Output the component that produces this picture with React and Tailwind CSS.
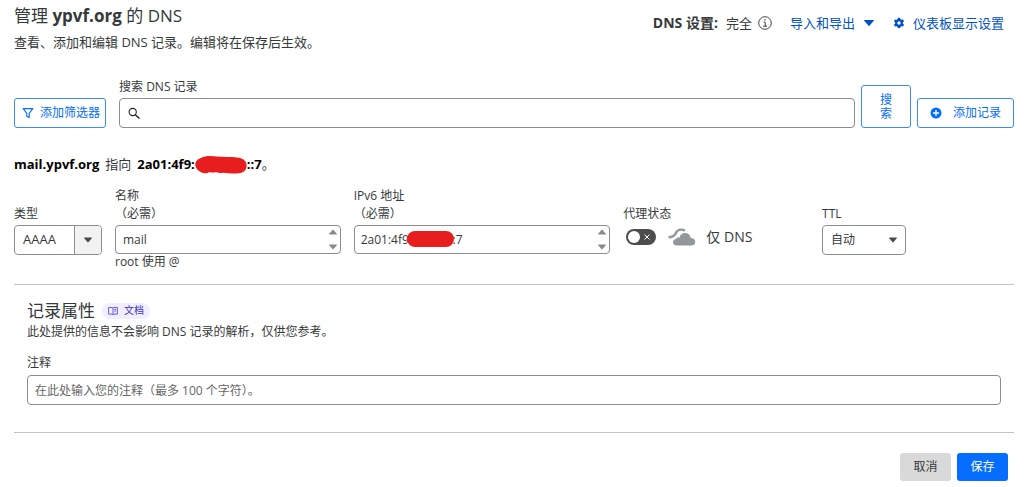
import React, { useState } from 'react';

const Caret = ({ className }) => (
  <svg viewBox="0 0 10 6" className={className} fill="currentColor" aria-hidden="true">
    <path d="M0.6 0h8.8a.5.5 0 0 1 .4.8L5.4 5.8a.5.5 0 0 1-.8 0L.2.8A.5.5 0 0 1 .6 0z" />
  </svg>
);

const FunnelIcon = () => (
  <svg viewBox="0 0 12 12" className="w-3 h-3" fill="none" stroke="currentColor" strokeWidth="1.1" strokeLinejoin="round" aria-hidden="true">
    <path d="M1.2 1.6h9.6L7.2 6.4v4.2L4.8 9.2V6.4z" />
  </svg>
);

const SearchIcon = () => (
  <svg viewBox="0 0 12 12" className="w-3 h-3 shrink-0" fill="none" stroke="#222" strokeWidth="1.1" aria-hidden="true">
    <circle cx="4.7" cy="5" r="3.6" />
    <path d="M7.3 7.700l4.200 3.800" strokeWidth="1.4" />
  </svg>
);

const InfoIcon = () => (
  <svg viewBox="0 0 14 14" className="w-3.5 h-3.5" fill="none" stroke="#444" aria-hidden="true">
    <circle cx="7" cy="7" r="6.3" strokeWidth="1" />
    <path d="M5.6 6h1.6v4.2M5.2 10.3h3.8" strokeWidth="1" />
    <circle cx="7" cy="3.8" r="0.8" fill="#444" stroke="none" />
  </svg>
);

const GearIcon = () => (
  <svg viewBox="0 0 12 12" className="w-3 h-3" aria-hidden="true">
    <g fill="#0051c3">
      <rect x="4.7" y="0.8" width="2.6" height="10.4" rx="0.6" />
      <rect x="4.7" y="0.8" width="2.6" height="10.4" rx="0.6" transform="rotate(60 6 6)" />
      <rect x="4.7" y="0.8" width="2.6" height="10.4" rx="0.6" transform="rotate(120 6 6)" />
      <circle cx="6" cy="6" r="3.9" />
    </g>
    <circle cx="6" cy="6" r="1.7" fill="#fff" />
  </svg>
);

const PlusCircleIcon = () => (
  <svg viewBox="0 0 12 12" className="w-3 h-3" aria-hidden="true">
    <circle cx="6" cy="6" r="5.5" fill="#056dff" />
    <path d="M6 3v6M3 6h6" stroke="#fff" strokeWidth="1.3" />
  </svg>
);

const BookIcon = () => (
  <svg viewBox="0 0 10 9" className="w-2.5 h-2.5" fill="none" stroke="#5b4fd6" strokeWidth="0.9" aria-hidden="true">
    <path d="M.6 1h3.6l.8.6.8-.6h3.6v6.6H5.8L5 8.2l-.8-.6H.6zM5 1.6v6.6M6.4 3h1.7M6.4 4.6h1.7" />
  </svg>
);

const CloudIcon = () => (
  <svg viewBox="0 0 28 20" className="w-7 h-5 shrink-0" fill="#92979b" aria-hidden="true">
    <path d="M.5 10.200c3.800 0 5.400-.6 7-3.600C9 3.600 10.800 2.600 13 2.600c1.400 0 2.600.3 3.800 1" fill="none" stroke="#92979b" strokeWidth="2.400" />
    <path d="M9.300 18.500c-2.600 0-4.300-1.300-4.300-3.300 0-1.800 1.200-3 3-3.200.3-1 1.100-1.600 2.100-1.600.5 0 .9.100 1.200.3C12.100 7.600 14.300 6 17 6c3 0 5.200 1.900 5.700 4.900 2.600.1 4.600 1.600 4.600 3.800s-1.600 3.800-4 3.800z" />
  </svg>
);

const Scribble = ({ className }) => (
  <svg viewBox="0 0 52 18" preserveAspectRatio="none" className={className} fill="#e81e1e" aria-hidden="true">
    <path d="M6 2C10-.4 17-.2 22 .6c6 .6 14 .2 20 .8 6 .4 9.500 3.400 9.600 8 0 5-3.200 7.400-7.600 7.800-6 .6-11 .2-16-.4-3 .4-5 .2-7-.8-2 .6-4.500.8-6.500 0-2 1.200-5.500 2-8.500.2C2.500 14.500.2 12 .3 8.600.4 5.500 2.800 2.800 6 2z" />
  </svg>
);

const Steppers = () => (
  <span className="flex flex-col justify-between h-full py-[3px] pr-[3px] text-[#8a8a8a]">
    <Caret className="w-2 h-1.5 rotate-180" />
    <Caret className="w-2 h-1.5" />
  </span>
);

const Field = ({ id, label, required, children }) => (
  <div className="min-w-0">
    <label htmlFor={id} className="flex flex-col justify-end h-9 mb-0.5 leading-[18px]">
      <span>{label}</span>
      {required && <span>（必需）</span>}
    </label>
    {children}
  </div>
);

const App = () => {
  const [name, setName] = useState('mail');
  const [address, setAddress] = useState('2a01:4f9:' + '\u00a0'.repeat(12) + '::7');
  const [proxied, setProxied] = useState(false);

  return (
    <main className="pl-3.5 pr-2.5 pt-1 pb-2 bg-white text-[#36393a] text-xs font-['Open_Sans','Noto_Sans_CJK_SC',sans-serif]">
      <header className="flex justify-between">
        <div>
          <h1 className="text-[17px] leading-6">
            管理 <strong className="font-bold">ypvf.org</strong> 的 DNS
          </h1>
          <p className="mt-1 text-[13px] leading-5">查看、添加和编辑 DNS 记录。编辑将在保存后生效。</p>
        </div>
        <div className="flex items-center h-[38px] pr-2.5 text-[13px] leading-5">
          <strong className="mr-2 text-sm font-bold">DNS 设置:</strong>
          <span className="mr-1.5">完全</span>
          <button type="button" aria-label="DNS"><InfoIcon /></button>
          <button type="button" className="flex items-center gap-2 ml-[18px] text-[#0051c3]">
            导入和导出 <Caret className="w-3 h-1.5" />
          </button>
          <a href="#settings" className="flex items-center gap-2 ml-[18px] text-[#0051c3]">
            <GearIcon /> 仪表板显示设置
          </a>
        </div>
      </header>

      <form className="flex items-end mt-[25px]" onSubmit={(e) => e.preventDefault()}>
        <button type="button" className="flex items-center gap-1.5 h-[30px] pl-[7px] pr-[5px] shrink-0 border border-[#3b8bff] rounded-[3px] text-[#056dff]">
          <FunnelIcon /> 添加筛选器
        </button>
        <div className="flex-1 min-w-0 ml-[13px]">
          <label htmlFor="search" className="block leading-5 mb-px">搜索 DNS 记录</label>
          <div className="flex items-center gap-2 h-[30px] px-2 border border-[#8d8d8d] rounded-[4px]">
            <SearchIcon />
            <input id="search" type="text" className="flex-1 min-w-0 outline-none" />
          </div>
        </div>
        <button type="submit" className="w-[50px] h-[43px] px-4 ml-1.5 leading-[14px] shrink-0 border border-[#3b8bff] rounded-[3px] text-[#056dff]">
          搜索
        </button>
        <button type="button" className="flex items-center justify-center gap-[11px] h-[30px] px-3 ml-1.5 shrink-0 border border-[#3b8bff] rounded-[3px] text-[#056dff]">
          <PlusCircleIcon /> 添加记录
        </button>
      </form>

      <p className="flex items-center mt-[25px] h-6 text-[13px]">
        <strong className="font-bold text-black">mail.ypvf.org</strong>
        <span className="mx-1.5">指向</span>
        <strong className="font-bold text-black">2a01:4f9:</strong>
        <Scribble className="w-[52px] h-[18px]" />
        <strong className="font-bold text-black">::7</strong>。
      </p>

      <form onSubmit={(e) => e.preventDefault()}>
        <div className="grid grid-cols-[88px_226fr_257fr_186fr_84px_95fr] gap-x-[13px] mt-2.5 h-[97px]">
          <Field id="type" label="类型">
            <div className="grid h-[30px]">
              <select id="type" className="col-start-1 row-start-1 appearance-none pl-2 border border-[#8d8d8d] rounded-[4px] bg-white text-[13px]">
                <option>AAAA</option>
              </select>
              <span className="col-start-1 row-start-1 justify-self-end flex items-center justify-center w-[27px] my-px mr-px border-l border-[#8d8d8d] rounded-r-[3px] bg-[#f2f2f2] text-[#4a4a4a] pointer-events-none">
                <Caret className="w-2 h-1.5" />
              </span>
            </div>
          </Field>

          <Field id="name" label="名称" required>
            <div className="flex items-center h-[29px] border border-[#8d8d8d] rounded-[4px]">
              <input id="name" type="text" value={name} onChange={(e) => setName(e.target.value)} className="flex-1 min-w-0 pl-[7px] outline-none" />
              <Steppers />
            </div>
            <p className="leading-4">root 使用 @</p>
          </Field>

          <Field id="address" label="IPv6 地址" required>
            <div className="relative flex items-center h-[29px] border border-[#8d8d8d] rounded-[4px]">
              <input id="address" type="text" value={address} onChange={(e) => setAddress(e.target.value)} className="flex-1 min-w-0 pl-1.5 outline-none" />
              <span className="absolute left-[52px] top-[5px] w-[47px] h-4 rounded-full bg-[#e81e1e]"></span>
              <Steppers />
            </div>
          </Field>

          <Field id="proxy" label="代理状态">
            <div className="flex items-center h-6">
              <input id="proxy" type="checkbox" role="switch" checked={proxied} onChange={(e) => setProxied(e.target.checked)} className="peer sr-only" />
              <label htmlFor="proxy" className="flex items-center justify-between w-[30px] h-4 ml-[3px] pl-0.5 pr-1.5 rounded-full bg-[#4d4d4d] shrink-0">
                <span className="w-3 h-3 rounded-full bg-white"></span>
                <svg viewBox="0 0 6 6" className="w-1.5 h-1.5" stroke="#fff" strokeWidth="1" aria-hidden="true">
                  <path d="M.5.5l5 5M5.500.5l-5 5" />
                </svg>
              </label>
              <span className="flex items-center gap-2.5 ml-3 text-sm whitespace-nowrap">
                <CloudIcon /> 仅 DNS
              </span>
            </div>
          </Field>

          <Field id="ttl" label="TTL">
            <div className="grid h-[30px]">
              <select id="ttl" className="col-start-1 row-start-1 appearance-none pl-2 border border-[#8d8d8d] rounded-[4px] bg-white">
                <option>自动</option>
              </select>
              <span className="col-start-1 row-start-1 justify-self-end self-center mr-[9px] text-[#4a4a4a] pointer-events-none">
                <Caret className="w-2 h-1.5" />
              </span>
            </div>
          </Field>
        </div>

        <section className="px-[13px] pt-4 pb-[27px] border-y border-[#c4c4c4]">
          <div className="flex items-center gap-[7px]">
            <h2 className="text-[17px] leading-5">记录属性</h2>
            <a href="#docs" className="flex items-center gap-1.5 h-4 px-1.5 rounded-full bg-[#f0eeff] text-[#3d2fc4] text-[10px]">
              <BookIcon /> 文档
            </a>
          </div>
          <p className="mt-px leading-5">此处提供的信息不会影响 DNS 记录的解析，仅供您参考。</p>
          <label htmlFor="comment" className="block mt-[11px] mb-0.5 leading-5">注释</label>
          <input
            id="comment"
            type="text"
            placeholder="在此处输入您的注释（最多 100 个字符）。"
            className="block w-full h-[30px] px-[7px] border border-[#8d8d8d] rounded-[4px] outline-none placeholder:text-[#666]"
          />
        </section>

        <div className="flex justify-end gap-1.5 pt-5 pr-1.5">
          <button type="button" className="w-[51px] h-7 rounded-[3px] bg-[#d9d9d9]">取消</button>
          <button type="submit" className="w-[51px] h-7 rounded-[3px] bg-[#056dff] text-white">保存</button>
        </div>
      </form>
    </main>
  );
};

export default App;
